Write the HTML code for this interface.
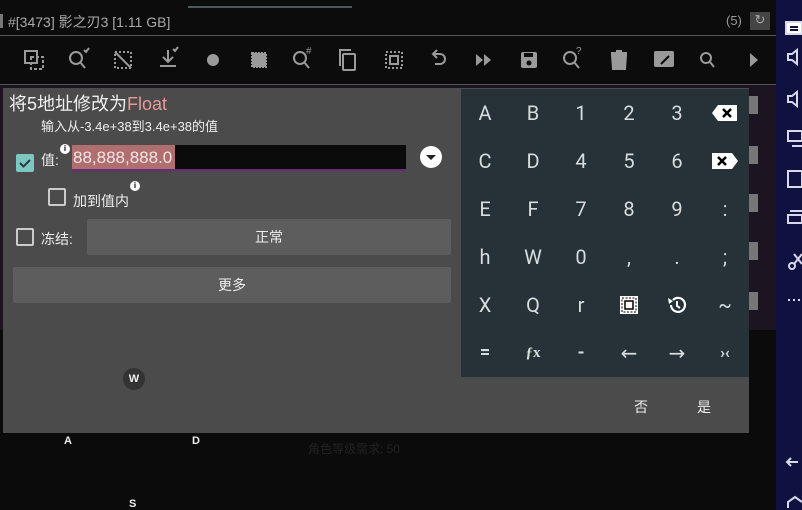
<!DOCTYPE html>
<html><head><meta charset="utf-8"><style>
*{margin:0;padding:0;box-sizing:border-box}
body{width:802px;height:510px;overflow:hidden;background:#0b0b0b;position:relative;font-family:"Liberation Sans","Noto Sans CJK SC",sans-serif;color:#eee}
.a{position:absolute}
.k{position:absolute;width:48px;height:48px;text-align:center;line-height:48px;font-size:20px;color:#d8dcdc;font-family:"Roboto","DejaVu Sans","Liberation Sans",sans-serif}
</style></head><body>
<div class="a" style="left:0;top:0;width:776px;height:84px;background:#0c0c0c"></div>
<div class="a" style="left:188px;top:6px;width:164px;height:2px;background:#4a5a60"></div>
<div class="a" style="left:0;top:14px;width:3px;height:14px;background:#777"></div>
<div class="a" style="left:8px;top:12px;font-size:14px;color:#aaa;font-family:'Liberation Sans Narrow','Liberation Sans','Noto Sans CJK SC',sans-serif">#[3473] 影之刃3 [1.11 GB]</div>
<div class="a" style="left:726px;top:13px;font-size:13px;color:#999">(5)</div>
<div class="a" style="left:750px;top:12px;width:20px;height:18px;background:#444;color:#aaa;font-size:13px;text-align:center">↻</div>
<div class="a" style="left:0;top:35px;width:776px;height:1px;background:#555"></div>
<svg class="a" style="left:0;top:36px" width="776" height="48" fill="none" stroke="#9a9a9a" stroke-width="2">
<rect x="25" y="15" width="12" height="12"/><rect x="31" y="21" width="12" height="12" stroke-dasharray="3 2"/>
<circle cx="76" cy="22" r="6"/><path d="M80 26l5 6M84 14l2 2 3-4"/>
<rect x="115" y="16" width="16" height="16" stroke-dasharray="2 2"/><path d="M115 16l16 16"/>
<path d="M168 14v12M163 21l5 5 5-5M160 30h16" /><path d="M173 13l2 2 3-4"/>
<circle cx="213" cy="24" r="6" fill="#9a9a9a" stroke="none"/>
<rect x="252" y="17" width="14" height="14" fill="#9a9a9a" stroke-dasharray="2 1"/>
<circle cx="300" cy="22" r="6"/><path d="M304 26l5 6"/><text x="306" y="18" font-size="10" fill="#9a9a9a" stroke="none">#</text>
<rect x="343" y="18" width="12" height="16" rx="1"/><path d="M340 30V14h11"/>
<rect x="386" y="16" width="16" height="16" stroke-dasharray="2 2"/><rect x="390" y="20" width="8" height="8"/>
<path d="M434 18h6a5 5 0 010 10h-5M437 14l-4 4 4 4"/>
<path d="M476 18l7 6-7 6zM484 18l7 6-7 6z" fill="#9a9a9a" stroke="none"/>
<rect x="521" y="16" width="16" height="16" rx="2" fill="#9a9a9a" stroke="none"/><rect x="524" y="17" width="9" height="4" fill="#0c0c0c" stroke="none"/><circle cx="529" cy="27" r="2.5" fill="#0c0c0c" stroke="none"/>
<circle cx="570" cy="22" r="6"/><path d="M574 26l5 6"/><text x="576" y="18" font-size="10" fill="#9a9a9a" stroke="none">?</text>
<path d="M612 19h14l-1 14h-12zM611 17h16M616 15h6" fill="#9a9a9a"/>
<rect x="654" y="15" width="20" height="16" rx="2" fill="#9a9a9a" stroke="none"/><path d="M661 28l8-8" stroke="#0c0c0c"/>
<circle cx="706" cy="22" r="5"/><path d="M710 26l4 5"/>
<path d="M750 17l8 7-8 7z" fill="#9a9a9a" stroke="none"/>
</svg>
<div class="a" style="left:0;top:84px;width:776px;height:246px;background:#1c1420"></div>
<div class="a" style="left:0;top:84px;width:776px;height:1px;background:#555"></div>
<div class="a" style="left:744px;top:96px;width:14px;height:18px;background:#777"></div>
<div class="a" style="left:744px;top:146px;width:14px;height:18px;background:#777"></div>
<div class="a" style="left:744px;top:194px;width:14px;height:18px;background:#777"></div>
<div class="a" style="left:744px;top:242px;width:14px;height:18px;background:#777"></div>
<div class="a" style="left:744px;top:292px;width:14px;height:18px;background:#777"></div>
<div class="a" style="left:3px;top:88px;width:746px;height:345px;background:#4b4b4b"></div>
<div class="a" style="left:9px;top:90px;font-size:18px;color:#f0f0f0">将5地址修改为<span style="color:#e89a9a">Float</span></div>
<div class="a" style="left:41px;top:116px;font-size:13px;color:#eee">输入从-3.4e+38到3.4e+38的值</div>
<div class="a" style="left:16px;top:154px;width:18px;height:18px;background:#7cc7c2;border-radius:2px"></div>
<svg class="a" style="left:16px;top:154px" width="18" height="18"><path d="M4 9l3.5 3.5L14 6" stroke="#2a3a3a" stroke-width="2" fill="none"/></svg>
<div class="a" style="left:41px;top:150px;font-size:14px">值:</div>
<div class="a" style="left:60px;top:144px;width:10px;height:10px;border-radius:50%;background:#fff;color:#000;font-size:8px;text-align:center;line-height:10px;font-weight:bold">i</div>
<div class="a" style="left:72px;top:145px;width:334px;height:24px;background:#0b0b0b"></div>
<div class="a" style="left:72px;top:169px;width:334px;height:2px;background:#6a2a7a"></div>
<div class="a" style="left:72px;top:145px;width:103px;height:24px;background:#b06e6e;font-size:17px;line-height:25px;color:#f2e6e6;padding-left:1px">88,888,888.0</div>
<div class="a" style="left:420px;top:146px;width:22px;height:22px;border-radius:50%;background:#fff"></div>
<svg class="a" style="left:420px;top:146px" width="22" height="22"><path d="M6 9h10l-5 5z" fill="#222"/></svg>
<div class="a" style="left:48px;top:188px;width:18px;height:18px;border:2px solid #ccc;border-radius:2px"></div>
<div class="a" style="left:73px;top:191px;font-size:14px">加到值内</div>
<div class="a" style="left:130px;top:181px;width:10px;height:10px;border-radius:50%;background:#fff;color:#000;font-size:8px;text-align:center;line-height:10px;font-weight:bold">i</div>
<div class="a" style="left:16px;top:228px;width:18px;height:18px;border:2px solid #ccc;border-radius:2px"></div>
<div class="a" style="left:41px;top:229px;font-size:14px">冻结:</div>
<div class="a" style="left:87px;top:219px;width:364px;height:36px;background:#5d5d5d;border-radius:2px;text-align:center;line-height:36px;font-size:14px">正常</div>
<div class="a" style="left:13px;top:267px;width:438px;height:36px;background:#5d5d5d;border-radius:2px;text-align:center;line-height:36px;font-size:14px">更多</div>
<div class="a" style="left:123px;top:368px;width:22px;height:22px;border-radius:50%;background:#333;font-size:11px;font-weight:bold;text-align:center;line-height:22px">W</div>
<div class="a" style="left:634px;top:397px;font-size:14px">否</div>
<div class="a" style="left:697px;top:397px;font-size:14px">是</div>
<div class="a" style="left:461px;top:89px;width:288px;height:288px;background:#263238"></div>
<div class="k" style="left:461px;top:89px">A</div><div class="k" style="left:509px;top:89px">B</div><div class="k" style="left:557px;top:89px">1</div><div class="k" style="left:605px;top:89px">2</div><div class="k" style="left:653px;top:89px">3</div>
<svg class="a" style="left:711px;top:103px" width="28" height="20"><path d="M7 2h19v16H7L1 10z" fill="#fff"/><path d="M12 6l8 8M20 6l-8 8" stroke="#000" stroke-width="2.5"/></svg>
<div class="k" style="left:461px;top:137px">C</div><div class="k" style="left:509px;top:137px">D</div><div class="k" style="left:557px;top:137px">4</div><div class="k" style="left:605px;top:137px">5</div><div class="k" style="left:653px;top:137px">6</div>
<svg class="a" style="left:711px;top:151px" width="28" height="20"><path d="M1 2h20l6 8-6 8H1z" fill="#fff"/><path d="M7 6l8 8M15 6l-8 8" stroke="#000" stroke-width="2.5"/></svg>
<div class="k" style="left:461px;top:185px">E</div><div class="k" style="left:509px;top:185px">F</div><div class="k" style="left:557px;top:185px">7</div><div class="k" style="left:605px;top:185px">8</div><div class="k" style="left:653px;top:185px">9</div><div class="k" style="left:701px;top:185px">:</div>
<div class="k" style="left:461px;top:233px">h</div><div class="k" style="left:509px;top:233px">W</div><div class="k" style="left:557px;top:233px">0</div><div class="k" style="left:605px;top:233px">,</div><div class="k" style="left:653px;top:233px">.</div><div class="k" style="left:701px;top:233px">;</div>
<div class="k" style="left:461px;top:281px">X</div><div class="k" style="left:509px;top:281px">Q</div><div class="k" style="left:557px;top:281px">r</div>
<svg class="a" style="left:619px;top:295px" width="20" height="20"><rect x="1" y="1" width="18" height="18" fill="#fff"/><rect x="3" y="3" width="14" height="14" fill="none" stroke="#000" stroke-dasharray="2 1.5"/><rect x="6" y="6" width="8" height="8" fill="none" stroke="#000" stroke-width="1.5"/></svg>
<svg class="a" style="left:666px;top:294px" width="22" height="22"><path d="M5 11a7 7 0 1 0 2-5" stroke="#fff" stroke-width="2.2" fill="none"/><path d="M2 4l5 3-4 3z" fill="#fff"/><path d="M11 7v5l3 2" stroke="#fff" stroke-width="2" fill="none"/></svg>
<div class="k" style="left:701px;top:281px">~</div>
<div class="k" style="left:461px;top:329px;font-size:18px;font-weight:bold">=</div><div class="k" style="left:509px;top:329px;font-size:15px;font-weight:bold;font-family:'Liberation Serif',serif">ƒx</div><div class="k" style="left:557px;top:329px;font-size:18px;font-weight:bold">-</div><div class="k" style="left:605px;top:329px">←</div><div class="k" style="left:653px;top:329px">→</div><div class="k" style="left:701px;top:329px;font-size:16px;font-weight:bold">›‹</div>
<div class="a" style="left:64px;top:435px;font-size:11px;font-weight:bold">A</div>
<div class="a" style="left:192px;top:435px;font-size:11px;font-weight:bold">D</div>
<div class="a" style="left:129px;top:498px;font-size:11px;font-weight:bold">S</div>
<div class="a" style="left:308px;top:440px;font-size:12px;color:#222">角色等级需求: 50</div>
<div class="a" style="left:776px;top:0;width:26px;height:510px;background:#0f1240"></div>
<svg class="a" style="left:776px;top:0" width="26" height="510" fill="none" stroke="#d8d8e8" stroke-width="2">
<rect x="10" y="22" width="16" height="12" fill="#fff"/><path d="M14 27h8M14 30h8" stroke="#0f1240"/>
<path d="M12 54h4l5-4v14l-5-4h-4z"/><path d="M12 96h4l5-4v14l-5-4h-4z"/>
<rect x="12" y="131" width="14" height="10"/><path d="M16 146h10"/>
<rect x="12" y="171" width="14" height="16"/>
<path d="M12 215h14v8H12zM14 211h12"/>
<circle cx="16" cy="266" r="3"/><path d="M18 264l8-10M18 254l8 10"/>
<path d="M12 300h2M17 300h2M22 300h2"/>
<path d="M22 462h-10M15 458l-4 4 4 4"/>
<path d="M12 508v-6l7-5 7 5"/>
</svg>
</body></html>
